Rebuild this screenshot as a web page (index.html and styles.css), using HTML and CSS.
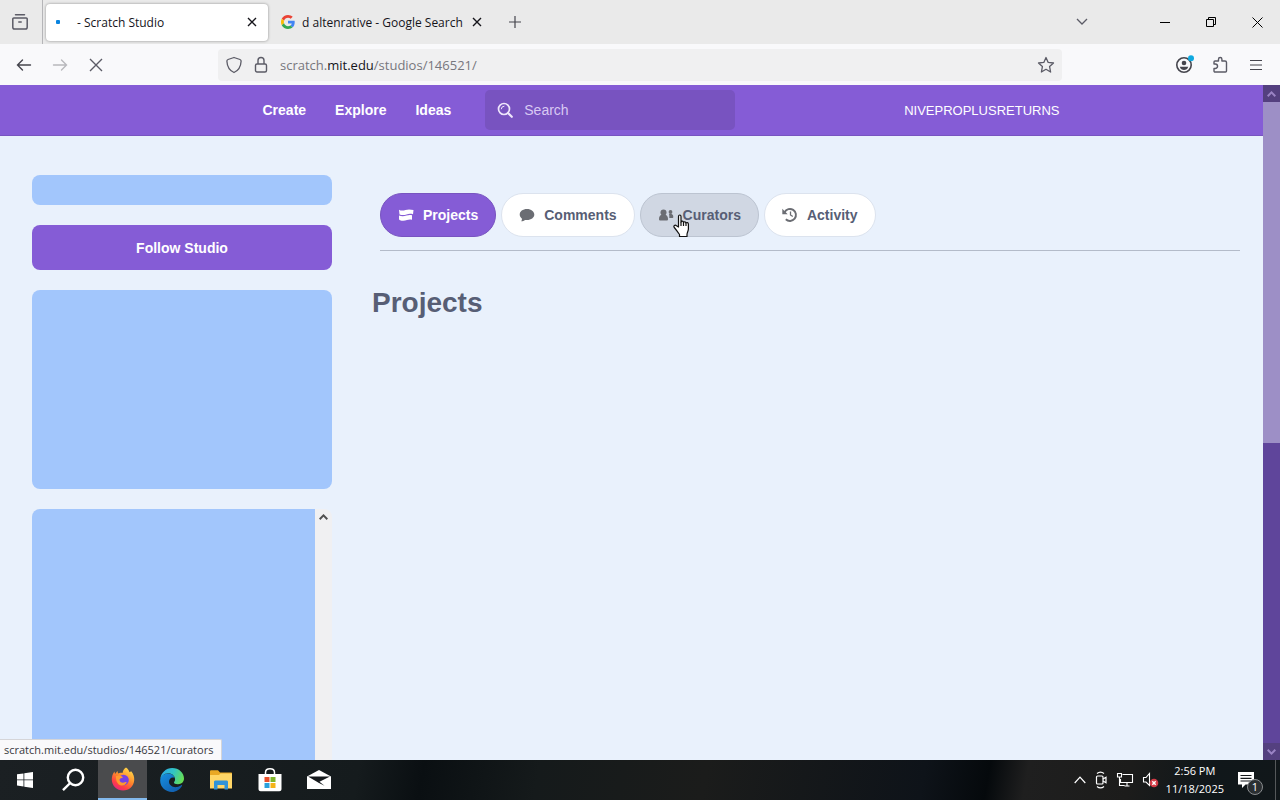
FILE: index.html
```html
<!DOCTYPE html>
<html lang="en">
<head>
    <meta charset="UTF-8">
    <meta name="viewport" content="width=device-width, initial-scale=1.0">
    <title>Scratch Studio</title>
    <link rel="stylesheet" href="styles.css">
</head>
<body>

<!-- Browser tabs -->
<header class="tab-strip">
    <button class="recent" aria-label="Recent browsing">
        <svg width="18" height="18" viewBox="0 0 18 18" fill="none" stroke="#5b5b66" stroke-width="1.5" stroke-linecap="round"><path d="M4.500 1.800h9M2.800 5h12.400a1 1 0 0 1 1 1v8.200a1.800 1.800 0 0 1-1.800 1.800H3.600a1.800 1.800 0 0 1-1.800-1.800V6a1 1 0 0 1 1-1zM7.800 9h2.400"/></svg>
    </button>
    <div class="tab active">
        <span class="loading-dot"></span>
        <span class="tab-title">- Scratch Studio</span>
        <button class="tab-close" aria-label="Close tab">
            <svg width="10" height="10" viewBox="0 0 10 10" stroke="#15141a" stroke-width="1.4"><path d="M1 1l8 8M9 1l-8 8"/></svg>
        </button>
    </div>
    <div class="tab">
        <svg class="favicon" width="14" height="14" viewBox="0 0 48 48"><path fill="#EA4335" d="M24 9.500c3.540 0 6.710 1.220 9.210 3.600l6.850-6.850C35.900 2.380 30.470 0 24 0 14.620 0 6.510 5.380 2.560 13.220l7.980 6.190C12.430 13.720 17.740 9.500 24 9.500z"/><path fill="#4285F4" d="M46.980 24.550c0-1.570-.15-3.090-.38-4.550H24v9.020h12.940c-.58 2.960-2.260 5.480-4.780 7.180l7.730 6c4.510-4.180 7.090-10.360 7.090-17.650z"/><path fill="#FBBC05" d="M10.530 28.590c-.48-1.450-.76-2.990-.76-4.590s.27-3.140.76-4.590l-7.980-6.190C.92 16.460 0 20.120 0 24s.92 7.540 2.560 10.780l7.970-6.190z"/><path fill="#34A853" d="M24 48c6.480 0 11.930-2.130 15.890-5.810l-7.730-6c-2.150 1.450-4.920 2.300-8.160 2.300-6.260 0-11.570-4.220-13.470-9.910l-7.980 6.190C6.510 42.620 14.620 48 24 48z"/></svg>
        <span class="tab-title">d altenrative - Google Search</span>
        <button class="tab-close" aria-label="Close tab">
            <svg width="10" height="10" viewBox="0 0 10 10" stroke="#15141a" stroke-width="1.4"><path d="M1 1l8 8M9 1l-8 8"/></svg>
        </button>
    </div>
    <button class="new-tab" aria-label="New tab">
        <svg width="12" height="12" viewBox="0 0 12 12" stroke="#45454d" stroke-width="1.2"><path d="M6 0v12M0 6h12"/></svg>
    </button>
    <div class="window-buttons">
        <button class="list-tabs" aria-label="List all tabs">
            <svg width="12" height="8" viewBox="0 0 12 8" fill="none" stroke="#5b5b66" stroke-width="1.3"><path d="M1 1l5 5 5-5"/></svg>
        </button>
        <button aria-label="Minimize">
            <svg width="10" height="10" viewBox="0 0 10 10" stroke="#000"><path d="M0 5.500h10"/></svg>
        </button>
        <button aria-label="Restore">
            <svg width="10" height="10" viewBox="0 0 10 10" fill="none" stroke="#000"><path d="M.5 2.500h7v7h-7zM2.500 2.500v-2h7v7h-2"/></svg>
        </button>
        <button aria-label="Close">
            <svg width="11" height="11" viewBox="0 0 11 11" stroke="#000"><path d="M.5.5l10 10M10.500.5l-10 10"/></svg>
        </button>
    </div>
</header>

<!-- Browser toolbar -->
<div class="toolbar">
    <div class="nav-buttons">
        <button aria-label="Back">
            <svg width="16" height="14" viewBox="0 0 16 14" fill="none" stroke="#45454d" stroke-width="1.4" stroke-linecap="round"><path d="M14.500 7H1.500M6.500 2L1.500 7l5 5"/></svg>
        </button>
        <button aria-label="Forward" disabled>
            <svg width="16" height="14" viewBox="0 0 16 14" fill="none" stroke="#b8b8bc" stroke-width="1.4" stroke-linecap="round"><path d="M1.500 7h13M9.500 2l5 5-5 5"/></svg>
        </button>
        <button aria-label="Stop">
            <svg width="14" height="14" viewBox="0 0 14 14" stroke="#5b5b66" stroke-width="1.4"><path d="M1 1l12 12M13 1L1 13"/></svg>
        </button>
    </div>
    <div class="url-bar">
        <svg width="16" height="18" viewBox="0 0 16 18" fill="none" stroke="#5b5b66" stroke-width="1.3" stroke-linejoin="round"><path d="M8 1.500l6 2c.9.300 1.200.8 1.100 1.700C14.800 11 12.500 14.500 8 16.500 3.500 14.500 1.200 11 .9 5.200.8 4.300 1.100 3.800 2 3.500z"/></svg>
        <svg width="14" height="18" viewBox="0 0 14 18" fill="none" stroke="#5b5b66" stroke-width="1.4"><rect x="1.500" y="8" width="11" height="8" rx="1.500"/><path d="M4 8V4.500a3 3 0 0 1 6 0V8"/></svg>
        <span class="url">scratch.<b>mit.edu</b>/studios/146521/</span>
        <button class="bookmark" aria-label="Bookmark this page">
            <svg width="18" height="18" viewBox="0 0 18 18" fill="none" stroke="#5b5b66" stroke-width="1.3" stroke-linejoin="round"><path d="M9 1.500l2.200 4.900 5.300.6-3.900 3.600 1 5.400L9 13.300 4.400 16l1-5.400L1.500 7l5.300-.6z"/></svg>
        </button>
    </div>
    <div class="tools">
        <button aria-label="Account">
            <svg width="20" height="20" viewBox="0 0 20 20"><circle cx="10" cy="10" r="7.200" fill="none" stroke="#45454d" stroke-width="1.600"/><circle cx="10" cy="8" r="2.300" fill="#45454d"/><path d="M5.800 11.800h8.400c-.5 2.200-2.300 3.200-4.200 3.200s-3.700-1-4.200-3.200z" fill="#45454d"/><circle cx="17" cy="3.200" r="3" fill="#10a9e0"/></svg>
        </button>
        <button aria-label="Extensions">
            <svg width="16" height="18" viewBox="0 0 16 18" fill="none" stroke="#5b5b66" stroke-width="1.400" stroke-linejoin="round"><path d="M2 8V6A1 1 0 0 1 3 5h3.500V3.200a1.700 1.700 0 0 1 3.400 0V5H13a1.500 1.500 0 0 1 1.500 1.500V15a1 1 0 0 1-1 1H3a1 1 0 0 1-1-1v-2.500h1.300a2.200 2.200 0 0 0 0-4.500z"/></svg>
        </button>
        <button aria-label="Menu">
            <svg width="12" height="12" viewBox="0 0 12 12" stroke="#45454d" stroke-width="1.200"><path d="M0 1.500h12M0 6h12M0 10.500h12"/></svg>
        </button>
    </div>
</div>

<!-- Page -->
<div class="viewport">
    <div class="page">
        <nav class="site-nav">
            <div class="site-nav-inner">
                <a href="#">Create</a>
                <a href="#">Explore</a>
                <a href="#">Ideas</a>
                <label class="search">
                    <svg width="16" height="16" viewBox="0 0 16 16" fill="none" stroke="#eee6fb" stroke-width="1.700" stroke-linecap="round"><circle cx="7" cy="7" r="5.500"/><path d="M11 11l3.800 3.800" stroke-width="2.200"/><path d="M4.300 6.800A2.700 2.700 0 0 1 7 4.200" stroke-width="1"/></svg>
                    <input type="text" placeholder="Search" aria-label="Search">
                </label>
                <a href="#" class="username">NIVEPROPLUSRETURNS</a>
            </div>
        </nav>
        <div class="studio">
            <aside class="studio-info">
                <div class="placeholder title-box"></div>
                <button class="follow">Follow Studio</button>
                <div class="placeholder image-box"></div>
                <div class="description">
                    <div class="description-text"></div>
                    <div class="description-scroll">
                        <svg width="9" height="6" viewBox="0 0 9 6" fill="none" stroke="#505050" stroke-width="2"><path d="M.7 5.200l3.800-3.800 3.800 3.800"/></svg>
                    </div>
                </div>
            </aside>
            <main class="studio-main">
                <div class="studio-tabs">
                    <a href="#" class="pill selected">
                        <svg width="16" height="16" viewBox="0 0 16 16" fill="#fff"><path d="M1 2.800c2 1.200 4.500.9 6.500.2 2.500-.8 5-.6 8 0L15 7.200c-2.500-.8-4.500-.5-6.500.2-2.300.8-4.500.8-7 0zM1 8.600c2.600.9 5 .8 7.500 0 2-.7 3.500-.8 5.500-.4v4.600c-1.800-.5-3.500-.3-5 .3-2.300.9-4.800.9-7 .2-.7-.2-1-.6-1-1.200z"/></svg>
                        <span>Projects</span>
                    </a>
                    <a href="#" class="pill">
                        <svg width="16" height="16" viewBox="0 0 16 16" fill="#6b6d73"><path d="M8 2C3.800 2 .7 4.400.7 7.600c0 1.700.9 3.100 2.300 4.100 0 1-.4 1.900-.8 2.600 1.600 0 2.900-.5 3.900-1.400.6.100 1.300.2 1.900.2 4.200 0 7.300-2.400 7.300-5.500S12.200 2 8 2z"/></svg>
                        <span>Comments</span>
                    </a>
                    <a href="#" class="pill hover">
                        <svg width="16" height="16" viewBox="0 0 16 16" fill="#6b6d73"><circle cx="5.500" cy="5.500" r="3"/><path d="M1 12c0-2.600 1.200-4.200 3.200-4.500h2.600c2 .3 3.200 1.900 3.200 4.500 0 1-.5 1.600-1.400 1.600H2.400C1.500 13.600 1 13 1 12z"/><circle cx="12.500" cy="5" r="1.900"/><path d="M11 7h2.600c1.100.4 1.700 1.400 1.700 2.900 0 .7-.4 1.100-1 1.100h-3c.1-1.600 0-2.900-.3-4z"/></svg>
                        <span>Curators</span>
                        <svg class="pointer" width="17" height="24" viewBox="0 0 17 24" fill="#fff" stroke="#111" stroke-width="1.200" stroke-linejoin="round"><path d="M5.500 13V2.500c0-2 2.500-2 2.500 0V8c.3-1.200 2.300-1.100 2.500.4.500-1 2.200-.8 2.400.6.700-.9 2.500-.5 2.500 1.200V15c0 2-1.400 3.500-1.400 5.500v2H6.500v-2C4.500 18 3.500 16 1.300 13.500c-1.200-1.600.7-3 2.200-1.700z"/><path d="M8 8v4M10.500 8.500V12M13 9v3" fill="none"/></svg>
                    </a>
                    <a href="#" class="pill">
                        <svg width="16" height="16" viewBox="0 0 16 16" fill="none" stroke="#6b6d73" stroke-width="1.900"><path d="M2.600 5.200A6 6 0 1 1 3.800 12.300"/><path d="M.3 1.800v5.400h5.400z" fill="#6b6d73" stroke="none"/><path d="M8.500 4.500V8l2.300 1.500" stroke-width="1.300"/></svg>
                        <span>Activity</span>
                    </a>
                </div>
                <h2>Projects</h2>
            </main>
        </div>
    </div>
    <div class="scrollbar">
        <span class="scroll-arrow"><svg width="9" height="6" viewBox="0 0 9 6" fill="none" stroke="#9a83c4" stroke-width="2"><path d="M.7 5.200l3.800-3.800 3.800 3.800"/></svg></span>
        <span class="scroll-thumb"></span>
        <span class="scroll-track"></span>
        <span class="scroll-arrow"><svg width="9" height="6" viewBox="0 0 9 6" fill="none" stroke="#9a83c4" stroke-width="2"><path d="M.7.8l3.800 3.800L8.300.8"/></svg></span>
    </div>
    <div class="link-status">scratch.mit.edu/studios/146521/curators</div>
</div>

<!-- Windows taskbar -->
<footer class="taskbar">
    <button aria-label="Start">
        <svg width="16" height="16" viewBox="0 0 16 16" fill="#fff"><path d="M0 2.300L6.500 1.400v6.100H0zM7.300 1.300L16 0v7.500H7.300zM0 8.300h6.500v6.200L0 13.600zM7.300 8.300H16V16l-8.700-1.300z"/></svg>
    </button>
    <button aria-label="Search">
        <svg width="24" height="24" viewBox="0 0 24 24" fill="none" stroke="#fff" stroke-width="2.400"><circle cx="13.500" cy="9.500" r="7.700"/><path d="M8.200 15L1 22.200"/></svg>
    </button>
    <button class="running" aria-label="Firefox">
        <svg width="24" height="24" viewBox="0 0 24 24">
            <defs><linearGradient id="fox" x1="0.8" y1="0" x2="0.2" y2="1"><stop offset="0" stop-color="#ffe14d"/><stop offset=".45" stop-color="#ff8a2b"/><stop offset=".75" stop-color="#ff3f45"/><stop offset="1" stop-color="#e3208a"/></linearGradient></defs>
            <path fill="url(#fox)" d="M15 .5c2 1.300 3 3 3.500 4.700l1.700-1c2.200 2.500 3.300 5.500 3 9C22.700 19.300 18 23.500 12 23.500S1 19 .8 12.700C.7 9.500 1.700 6.700 3.500 4.500L4 7l2.500-3 .5 2.500c1.500-.7 3-.8 4.500-.4C12 3.500 13 1.700 15 .5z"/>
            <circle cx="12.500" cy="13" r="5.300" fill="#7542e5"/>
            <path fill="#ff9a2e" d="M5 9c2.500-1 5-.6 7 1.200-1.500 1-2.800 1.200-3.500 2.300 0 2 1.500 3.300 3.500 3.300 1.500 0 2.500-.8 3.800-.7-1 2.500-3 3.700-5.300 3.500C7 18.300 4.500 14 5 9z"/>
        </svg>
    </button>
    <button aria-label="Edge">
        <svg width="24" height="24" viewBox="0 0 24 24">
            <defs><linearGradient id="edgeTop" x1="0" y1="0.3" x2="1" y2="0.6"><stop offset="0" stop-color="#2ba8e8"/><stop offset=".5" stop-color="#32c5c4"/><stop offset="1" stop-color="#69df4f"/></linearGradient><linearGradient id="edgeLow" x1="0" y1="0" x2="1" y2="1"><stop offset="0" stop-color="#168fe0"/><stop offset="1" stop-color="#1156a5"/></linearGradient></defs>
            <path fill="url(#edgeLow)" d="M.2 12c.4-4 4-6.500 8-6.500 3.500 0 6 2.300 6.300 4.500C12 8.700 9 10.500 9 13.800c0 3.500 4 6 8 5.200 1.800-.3 3-1 4.300-1.800.6-.3 1 .2.600.8C19.800 21.500 16.200 24 12 24 5.300 24-.3 18.700.2 12z"/>
            <path fill="url(#edgeTop)" d="M.3 11C1 4.700 6 0 12.200 0 19 0 24 5 24 10.500c0 3.500-2.500 5.700-6 5.700-2.800 0-4.300-1-4-2 .6-.9 1.300-1.800 1-3.500C14.500 7.500 11.500 5 7.800 5.300 4.300 5.600 1.600 7.700.3 11z"/>
        </svg>
    </button>
    <button aria-label="File Explorer">
        <svg width="22" height="20" viewBox="0 0 22 20"><path fill="#e9a825" d="M0 1.500C0 .7.500.2 1.300.2H8l2 2.300h11c.6 0 1 .4 1 1V18H0z"/><path fill="#ffd667" d="M0 5h9l1.500-1.500H22V18.500H0z"/><path fill="#2f93d8" d="M4 19.500V12c0-1 .6-1.500 1.500-1.500h11c.9 0 1.500.5 1.500 1.500v7.500h-3.500V15h-7v4.500z"/></svg>
    </button>
    <button aria-label="Microsoft Store">
        <svg width="24" height="24" viewBox="0 0 24 24"><path d="M7.500 6V4.500C7.500 2 9.300.8 12 .8s4.500 1.200 4.500 3.700V6" fill="none" stroke="#fff" stroke-width="1.500"/><path fill="#fff" d="M.5 6h23v15c0 1.300-.9 2.300-2.200 2.300H2.700C1.400 23.300.5 22.300.5 21z"/><path fill="#e94f2b" d="M6.500 9h5v5h-5z"/><path fill="#7fb52b" d="M12.500 9h5v5h-5z"/><path fill="#2ba0dc" d="M6.500 15h5v5h-5z"/><path fill="#f4b41a" d="M12.500 15h5v5h-5z"/></svg>
    </button>
    <button aria-label="Mail">
        <svg width="24" height="20" viewBox="0 0 24 20"><path fill="#fff" d="M0 6.500L12 0l12 6.500V19H0z"/><path fill="#15191c" d="M1 6.500h22l-10.500 5.300 5 4L12 13z"/></svg>
    </button>
    <div class="tray">
        <svg width="12" height="8" viewBox="0 0 12 8" fill="none" stroke="#fff" stroke-width="1.200"><path d="M.7 7L6 1.200 11.300 7"/></svg>
        <svg width="14" height="18" viewBox="0 0 14 18" fill="none" stroke="#fff" stroke-width="1.200"><rect x="2.500" y="5" width="6.500" height="8" rx="1"/><path d="M9 8l3-1.700v5.400L9 10M3 2.500C5 .8 8 .8 10 2.500M3 15.500c2 1.700 5 1.700 7 0"/></svg>
        <svg width="18" height="16" viewBox="0 0 18 16" fill="none" stroke="#fff" stroke-width="1.100"><path d="M6.500 2.500h10v8h-12V7M8.500 14h5M11 10.500V14M1.500 1.500h4V5h-4zM3.500 5v8.500h5"/></svg>
        <svg width="17" height="16" viewBox="0 0 17 16" fill="none" stroke="#fff" stroke-width="1.100"><path d="M7.500 1.500v12L4 10H1.500V5.500H4z"/><circle cx="12" cy="11" r="4.300" fill="#d13a45" stroke="none"/><path d="M10.300 9.300l3.400 3.400M13.700 9.300l-3.400 3.400" stroke-width="1.400"/></svg>
    </div>
    <div class="clock">
        <span>2:56 PM</span>
        <span>11/18/2025</span>
    </div>
    <button class="notifications" aria-label="Notifications">
        <svg width="17" height="17" viewBox="0 0 17 17"><path fill="#fff" d="M0 0h16v12.500H7.500L4 16v-3.500H0z"/><path stroke="#15191c" stroke-width="1.200" d="M2.500 3.500h11M2.500 6.300h11M2.500 9h11"/></svg>
        <span class="badge">1</span>
    </button>
</footer>

</body>
</html>
```
FILE: styles.css
```css
* {
    box-sizing: border-box;
}

body {
    margin: 0;
    height: 100vh;
    display: flex;
    flex-direction: column;
    overflow: hidden;
    font-family: "Liberation Sans", Arial, sans-serif;
    background: #e9f1fc;
}

button {
    display: flex;
    align-items: center;
    justify-content: center;
    padding: 0;
    border: none;
    background: none;
    font-family: inherit;
}

a {
    text-decoration: none;
}

svg {
    flex-shrink: 0;
}

/* Tabs */
.tab-strip {
    display: flex;
    align-items: center;
    height: 44px;
    flex-shrink: 0;
    background: #eaeaea;
    font-family: "Open Sans", "Noto Sans", sans-serif;
    font-size: 12px;
    color: #15141a;
}

.recent {
    width: 43px;
    height: 44px;
    padding-right: 2px;
    border-right: 1px solid #b5b5b8;
}

.tab {
    display: flex;
    align-items: center;
    width: 222px;
    height: 37px;
    margin-left: 3px;
    padding: 0 11px 0 10px;
    border-radius: 4px;
}

.tab.active {
    background: #fff;
    box-shadow: 0 0 3px rgba(0, 0, 0, 0.4);
}

.loading-dot {
    width: 4px;
    height: 4px;
    margin-right: 17px;
    border-radius: 1px;
    background: #0a84e0;
}

.favicon {
    margin-right: 7px;
}

.tab-title {
    flex: 1;
    white-space: nowrap;
}

.new-tab {
    width: 32px;
    height: 32px;
    margin-left: 6px;
}

.window-buttons {
    display: flex;
    margin-left: auto;
}

.window-buttons button {
    width: 46px;
    height: 44px;
}

.window-buttons .list-tabs {
    width: 32px;
    margin-right: 44px;
}

/* Toolbar */
.toolbar {
    display: flex;
    align-items: center;
    height: 41px;
    flex-shrink: 0;
    background: #f9f9fb;
}

.nav-buttons {
    display: flex;
    width: 218px;
    padding-left: 6px;
}

.nav-buttons button {
    width: 36px;
    height: 32px;
}

.url-bar {
    display: flex;
    align-items: center;
    flex: 1;
    height: 32px;
    gap: 12px;
    padding: 0 7px 0 8px;
    border-radius: 4px;
    background: #f0f0f1;
    font-family: "Open Sans", "Noto Sans", sans-serif;
    font-size: 13px;
}

.url {
    flex: 1;
    color: #77777d;
}

.url b {
    font-weight: normal;
    color: #15141a;
}

.tools {
    display: flex;
    justify-content: flex-end;
    width: 218px;
    padding-right: 6px;
}

.tools button {
    width: 36px;
    height: 32px;
}

/* Page */
.viewport {
    position: relative;
    display: flex;
    flex: 1;
    min-height: 0;
}

.page {
    display: flex;
    flex-direction: column;
    flex: 1;
    min-width: 0;
}

.site-nav {
    flex-shrink: 0;
    height: 51px;
    background: #855cd6;
    border-bottom: 1px solid #7854c0;
}

.site-nav-inner {
    display: flex;
    align-items: center;
    max-width: 942px;
    height: 50px;
    margin: 0 auto;
    padding: 0 43px 0 87px;
    font-size: 14px;
    font-weight: bold;
}

.site-nav-inner a {
    padding: 0 14px 0 15px;
    color: #fff;
}

.search {
    display: flex;
    align-items: center;
    gap: 11px;
    width: 250px;
    height: 40px;
    margin-left: 20px;
    padding: 0 12px;
    border-radius: 5px;
    background: #7853c0;
}

.search input {
    flex: 1;
    min-width: 0;
    padding: 0;
    border: none;
    outline: none;
    background: none;
    font-family: inherit;
    font-size: 14px;
    color: #fff;
}

.search input::placeholder {
    color: #d8c9f3;
}

.site-nav-inner .username {
    margin-left: auto;
    padding: 0;
    font-size: 13px;
    font-weight: normal;
}

.studio {
    display: flex;
    gap: 40px;
    flex: 1;
    min-height: 0;
    padding: 39px 23px 0 32px;
}

.studio-info {
    display: flex;
    flex-direction: column;
    gap: 20px;
    width: 300px;
    flex-shrink: 0;
}

.placeholder {
    border-radius: 8px;
    background: #a2c6fc;
}

.title-box {
    height: 30px;
}

.follow {
    height: 45px;
    border-radius: 8px;
    background: #855cd6;
    color: #fff;
    font-size: 14px;
    font-weight: bold;
}

.image-box {
    height: 199px;
}

.description {
    display: flex;
    flex: 1;
    overflow: hidden;
    border-radius: 8px 8px 0 0;
    background: #f0f0f2;
}

.description-text {
    flex: 1;
    background: #a2c6fc;
}

.description-scroll {
    display: flex;
    justify-content: center;
    width: 17px;
    padding-top: 5px;
}

.studio-main {
    flex: 1;
}

.studio-tabs {
    display: flex;
    gap: 5px;
    margin: 18px 0 0 8px;
    padding-bottom: 13px;
    border-bottom: 1px solid #b3bbc9;
}

.pill {
    position: relative;
    display: flex;
    align-items: center;
    gap: 9px;
    height: 44px;
    padding: 0 17px;
    border: 1px solid #dce3ee;
    border-radius: 22px;
    background: #fff;
    color: #575e75;
    font-size: 14px;
    font-weight: bold;
}

.pill.selected {
    border-color: #7854c0;
    background: #855cd6;
    color: #fff;
}

.pill.hover {
    border-color: #bcc4d1;
    background: #d0d7e3;
}

.pointer {
    position: absolute;
    left: 32px;
    top: 20px;
}

h2 {
    margin: 35px 0 0;
    font-size: 28px;
    line-height: 34px;
    color: #575e75;
}

/* Page scrollbar */
.scrollbar {
    display: flex;
    flex-direction: column;
    width: 17px;
    background: #5f459b;
}

.scroll-arrow {
    display: flex;
    align-items: center;
    justify-content: center;
    height: 17px;
    background: #54407f;
}

.scroll-thumb {
    flex: 341;
    background: #9d8fc6;
}

.scroll-track {
    flex: 300;
}

.link-status {
    position: absolute;
    left: 0;
    bottom: 0;
    height: 21px;
    padding: 0 8px 0 4px;
    border: 1px solid #d5d5d8;
    border-width: 1px 1px 0 0;
    border-radius: 0 2px 0 0;
    background: #f9f9fb;
    font-family: "Open Sans", "Noto Sans", sans-serif;
    font-size: 11px;
    line-height: 20px;
    color: #38383d;
}

/* Taskbar */
.taskbar {
    display: flex;
    align-items: center;
    height: 40px;
    flex-shrink: 0;
    background: linear-gradient(100deg, #1b2023 0%, #151b1d 28%, #0a0f12 33%, #151a1b 42%, #1b1c1b 55%, #0e1319 72%, #05090c 77%, #1f1f1f 80%, #1c1c1b 88%, #10171a 94%, #11171a 100%);
    color: #fff;
    font-family: "Open Sans", "Noto Sans", sans-serif;
}

.taskbar button {
    width: 49px;
    height: 40px;
}

.taskbar .running {
    background: #4a4b4d;
    border-bottom: 2px solid #83b9ec;
}

.tray {
    display: flex;
    align-items: center;
    gap: 8px;
    margin-left: auto;
}

.clock {
    display: flex;
    flex-direction: column;
    align-items: center;
    margin-left: 7px;
    font-size: 11px;
    line-height: 18px;
}

.taskbar .notifications {
    position: relative;
    width: 52px;
    padding-right: 6px;
    border-right: 1px solid #55585a;
    margin-right: 4px;
    color: #fff;
}

.badge {
    position: absolute;
    right: 12px;
    bottom: 5px;
    width: 16px;
    height: 16px;
    border: 1px solid #8a8d8f;
    border-radius: 50%;
    background: #2b2f32;
    font-size: 11px;
    line-height: 14px;
    text-align: center;
}
```
